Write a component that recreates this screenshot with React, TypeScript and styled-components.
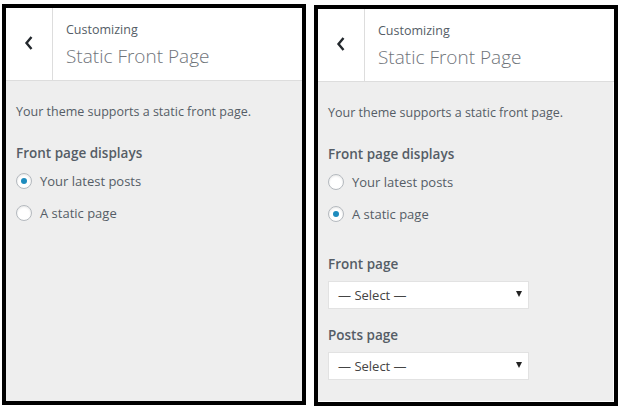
import React from "react";
import styled, { createGlobalStyle } from "styled-components";

const GlobalStyle = createGlobalStyle`
  html, body {
    margin: 0;
    padding: 0;
    background: #ffffff;
  }
  body {
    font-family: "Open Sans", "Noto Sans", sans-serif;
    color: #555d66;
  }
`;

const Page = styled.div`
  display: flex;
  align-items: flex-start;
  gap: 8px;
  padding: 4px 0 0 2px;
  width: 620px;
  height: 410px;
  box-sizing: border-box;
`;

const Panel = styled.div<{ $offset: number; $inner?: boolean }>`
  margin-top: ${(p) => p.$offset}px;
  width: 304px;
  height: 401px;
  box-sizing: border-box;
  border: 4px solid #000;
  background: #eeeeee;
  display: flex;
  flex-direction: column;
  overflow: hidden;
  box-shadow: ${(p) => (p.$inner ? "inset -1px -1px 0 #ffffff" : "none")};
`;

const Header = styled.div`
  display: flex;
  height: 73px;
  background: #fff;
  border-bottom: 1px solid #dddddd;
  box-sizing: border-box;
`;

const BackButton = styled.div`
  width: 47px;
  flex: none;
  display: flex;
  align-items: center;
  justify-content: center;
  border-right: 1px solid #dddddd;
  padding-bottom: 3px;
  box-sizing: border-box;
`;

const TitleBlock = styled.div`
  display: flex;
  flex-direction: column;
  padding: 13px 0 0 13px;
`;

const Crumb = styled.span`
  font-size: 12.5px;
  line-height: 18px;
  color: #555d66;
`;

const Title = styled.h3`
  margin: 5px 0 0;
  font-size: 19px;
  line-height: 24px;
  font-weight: 300;
  color: #6f747a;
`;

const Body = styled.div`
  display: flex;
  flex-direction: column;
  padding: 22px 10px 0;
`;

const Description = styled.p`
  margin: 0 0 22px;
  font-size: 12.5px;
  line-height: 18px;
  color: #555d66;
`;

const Label = styled.div<{ $top?: number }>`
  margin-top: ${(p) => p.$top ?? 0}px;
  font-size: 13.5px;
  line-height: 20px;
  font-weight: 600;
  color: #555d66;
`;

const RadioList = styled.div`
  display: flex;
  flex-direction: column;
  gap: 14px;
  margin-top: 9px;
`;

const RadioRow = styled.label`
  display: flex;
  align-items: center;
  gap: 8px;
  height: 18px;
  font-size: 13px;
  color: #555d66;
`;

const RadioCircle = styled.span<{ $on: boolean }>`
  width: 16px;
  height: 16px;
  box-sizing: border-box;
  border-radius: 50%;
  border: 1px solid #b4b9be;
  background: #fff;
  box-shadow: inset 0 1px 2px rgba(0, 0, 0, 0.1);
  display: flex;
  align-items: center;
  justify-content: center;
  &::after {
    content: "";
    display: ${(p) => (p.$on ? "block" : "none")};
    width: 6px;
    height: 6px;
    border-radius: 50%;
    background: #1e8cbe;
  }
`;

const SelectBox = styled.div`
  margin-top: 7px;
  width: 201px;
  height: 28px;
  box-sizing: border-box;
  background: #fff;
  border: 1px solid #e2e2e2;
  display: flex;
  align-items: center;
  justify-content: space-between;
  padding: 0 6px 0 9px;
  font-size: 13px;
  color: #444;
`;

const Arrow = styled.span`
  width: 0;
  height: 0;
  border-left: 3px solid transparent;
  border-right: 3px solid transparent;
  border-top: 6px solid #222;
  margin-top: -2px;
`;

const Chevron = () => (
  <svg width="12" height="16" viewBox="0 0 12 16">
    <polyline
      points="8.5,2 3.5,8 8.5,14"
      fill="none"
      stroke="#23282d"
      strokeWidth="2.4"
    />
  </svg>
);

const options = ["Your latest posts", "A static page"];

const Customizer = ({
  selected,
  offset,
  inner,
}: {
  selected: number;
  offset: number;
  inner?: boolean;
}) => (
  <Panel $offset={offset} $inner={inner}>
    <Header>
      <BackButton>
        <Chevron />
      </BackButton>
      <TitleBlock>
        <Crumb>Customizing</Crumb>
        <Title>Static Front Page</Title>
      </TitleBlock>
    </Header>
    <Body>
      <Description>Your theme supports a static front page.</Description>
      <Label>Front page displays</Label>
      <RadioList>
        {options.map((o, i) => (
          <RadioRow key={o}>
            <RadioCircle $on={i === selected} />
            {o}
          </RadioRow>
        ))}
      </RadioList>
      {selected === 1 && (
        <>
          <Label $top={31}>Front page</Label>
          <SelectBox>
            — Select —
            <Arrow />
          </SelectBox>
          <Label $top={16}>Posts page</Label>
          <SelectBox>
            — Select —
            <Arrow />
          </SelectBox>
        </>
      )}
    </Body>
  </Panel>
);

export default function App() {
  return (
    <>
      <GlobalStyle />
      <Page>
        <Customizer selected={0} offset={0} />
        <Customizer selected={1} offset={1} inner />
      </Page>
    </>
  );
}
